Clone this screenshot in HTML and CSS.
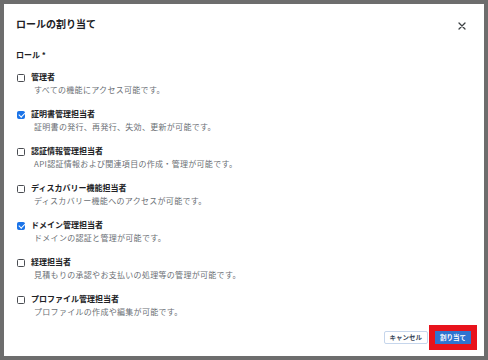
FILE: index.html
```html
<!DOCTYPE html>
<html lang="ja">
<head>
  <meta charset="UTF-8">
  <title>ロールの割り当て</title>
  <link rel="stylesheet" href="styles.css">
</head>
<body>
  <div class="dialog">
    <header class="dialog-header">
      <h1>ロールの割り当て</h1>
      <button class="close" aria-label="閉じる">
        <svg width="8" height="8" viewBox="0 0 8 8"><path d="M1 1L7 7M7 1L1 7" stroke="#3c4043" stroke-width="1.3" stroke-linecap="round"/></svg>
      </button>
    </header>

    <div class="dialog-body">
      <div class="field-label">ロール *</div>
      <ul class="roles">
        <li class="role">
          <span class="box"></span>
          <div><div class="name">管理者</div><div class="desc">すべての機能にアクセス可能です。</div></div>
        </li>
        <li class="role">
          <span class="box checked"></span>
          <div><div class="name">証明書管理担当者</div><div class="desc">証明書の発行、再発行、失効、更新が可能です。</div></div>
        </li>
        <li class="role">
          <span class="box"></span>
          <div><div class="name">認証情報管理担当者</div><div class="desc">API認証情報および関連項目の作成・管理が可能です。</div></div>
        </li>
        <li class="role">
          <span class="box"></span>
          <div><div class="name">ディスカバリー機能担当者</div><div class="desc">ディスカバリー機能へのアクセスが可能です。</div></div>
        </li>
        <li class="role">
          <span class="box checked"></span>
          <div><div class="name">ドメイン管理担当者</div><div class="desc">ドメインの認証と管理が可能です。</div></div>
        </li>
        <li class="role">
          <span class="box"></span>
          <div><div class="name">経理担当者</div><div class="desc">見積もりの承認やお支払いの処理等の管理が可能です。</div></div>
        </li>
        <li class="role">
          <span class="box"></span>
          <div><div class="name">プロファイル管理担当者</div><div class="desc">プロファイルの作成や編集が可能です。</div></div>
        </li>
      </ul>
    </div>

    <footer class="dialog-footer">
      <button class="btn btn-cancel">キャンセル</button>
      <button class="btn btn-primary">割り当て</button>
    </footer>
  </div>
</body>
</html>
```

FILE: styles.css
```css
html, body {
  margin: 0;
  padding: 0;
  height: 100%;
}
body {
  background: #6d6d6d;
  font-family: "Noto Sans CJK JP", "Noto Sans", sans-serif;
  color: #202124;
  padding: 4px 4px 0 4px;
  box-sizing: border-box;
}
.dialog {
  background: #fff;
  width: 480px;
  height: 352px;
  display: flex;
  flex-direction: column;
  box-sizing: border-box;
}
.dialog-header {
  display: flex;
  align-items: center;
  justify-content: space-between;
  padding: 11px 18px 0 12px;
  height: 29px;
  box-sizing: border-box;
}
.dialog-header h1 {
  margin: 0;
  font-size: 10px;
  line-height: 18px;
  font-weight: 700;
}
.close {
  border: 0;
  background: none;
  padding: 0;
  width: 8px;
  height: 8px;
  margin-top: 3px;
  display: flex;
}
.dialog-body {
  flex: 1;
  padding: 16px 12px 0 12px;
}
.field-label {
  font-size: 8px;
  line-height: 12px;
  font-weight: 700;
  margin-bottom: 10px;
}
.roles {
  list-style: none;
  margin: 0;
  padding: 0;
}
.role {
  display: flex;
  align-items: flex-start;
  gap: 6px;
  margin-bottom: 11px;
}
.box {
  width: 6px;
  height: 6px;
  border: 1.5px solid #4a4d52;
  border-radius: 1.5px;
  margin: 2.5px 0 0 1px;
  flex: none;
}
.box.checked {
  background: #1a73e8;
  border-color: #1a73e8;
  position: relative;
}
.box.checked::after {
  content: "";
  position: absolute;
  left: 1.5px;
  top: -1px;
  width: 2.5px;
  height: 5px;
  border: solid #fff;
  border-width: 0 1.5px 1.5px 0;
  transform: rotate(45deg);
}
.name {
  font-size: 8px;
  line-height: 12px;
  font-weight: 700;
  color: #202124;
}
.desc {
  font-size: 8px;
  line-height: 14px;
  letter-spacing: 0.3px;
  color: #6b6f75;
  padding-left: 3px;
}
.dialog-footer {
  display: flex;
  justify-content: flex-end;
  align-items: center;
  gap: 7px;
  padding: 0 13px 12px 0;
}
.btn {
  font-family: inherit;
  font-size: 6.5px;
  font-weight: 700;
  height: 13px;
  padding: 0 5px;
  line-height: 11px;
  white-space: nowrap;
}
.btn-cancel {
  background: #fff;
  color: #3c4a5c;
  border: 1px solid #c6d6ec;
  border-radius: 2px;
}
.btn-primary {
  background: #2f74d0;
  color: #fff;
  border: 1px solid #2f74d0;
  border-radius: 0;
  padding: 0 4px;
  box-shadow: 0 0 0 6px #e8131c;
}
```
